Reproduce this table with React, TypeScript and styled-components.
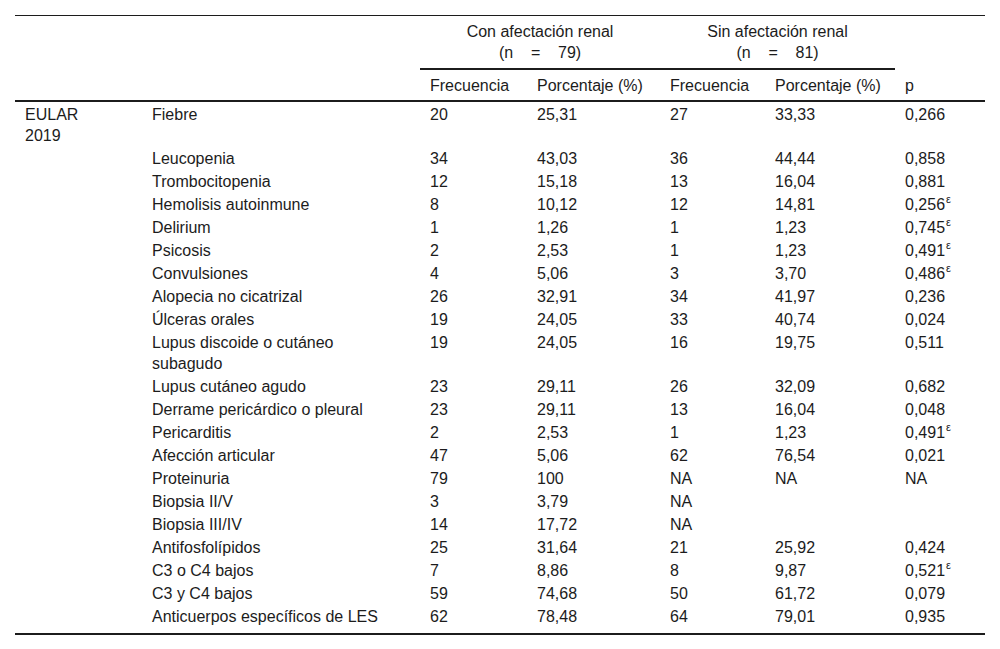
import React from 'react';
import styled, { createGlobalStyle } from 'styled-components';

type Row = {
  label: string;
  a: string;
  b: string;
  c: string;
  d: string;
  p: string;
  eps?: boolean;
};

const ROWS: Row[] = [
  { label: 'Fiebre', a: '20', b: '25,31', c: '27', d: '33,33', p: '0,266' },
  { label: 'Leucopenia', a: '34', b: '43,03', c: '36', d: '44,44', p: '0,858' },
  { label: 'Trombocitopenia', a: '12', b: '15,18', c: '13', d: '16,04', p: '0,881' },
  { label: 'Hemolisis autoinmune', a: '8', b: '10,12', c: '12', d: '14,81', p: '0,256', eps: true },
  { label: 'Delirium', a: '1', b: '1,26', c: '1', d: '1,23', p: '0,745', eps: true },
  { label: 'Psicosis', a: '2', b: '2,53', c: '1', d: '1,23', p: '0,491', eps: true },
  { label: 'Convulsiones', a: '4', b: '5,06', c: '3', d: '3,70', p: '0,486', eps: true },
  { label: 'Alopecia no cicatrizal', a: '26', b: '32,91', c: '34', d: '41,97', p: '0,236' },
  { label: 'Úlceras orales', a: '19', b: '24,05', c: '33', d: '40,74', p: '0,024' },
  { label: 'Lupus discoide o cutáneo subagudo', a: '19', b: '24,05', c: '16', d: '19,75', p: '0,511' },
  { label: 'Lupus cutáneo agudo', a: '23', b: '29,11', c: '26', d: '32,09', p: '0,682' },
  { label: 'Derrame pericárdico o pleural', a: '23', b: '29,11', c: '13', d: '16,04', p: '0,048' },
  { label: 'Pericarditis', a: '2', b: '2,53', c: '1', d: '1,23', p: '0,491', eps: true },
  { label: 'Afección articular', a: '47', b: '5,06', c: '62', d: '76,54', p: '0,021' },
  { label: 'Proteinuria', a: '79', b: '100', c: 'NA', d: 'NA', p: 'NA' },
  { label: 'Biopsia II/V', a: '3', b: '3,79', c: 'NA', d: '', p: '' },
  { label: 'Biopsia III/IV', a: '14', b: '17,72', c: 'NA', d: '', p: '' },
  { label: 'Antifosfolípidos', a: '25', b: '31,64', c: '21', d: '25,92', p: '0,424' },
  { label: 'C3 o C4 bajos', a: '7', b: '8,86', c: '8', d: '9,87', p: '0,521', eps: true },
  { label: 'C3 y C4 bajos', a: '59', b: '74,68', c: '50', d: '61,72', p: '0,079' },
  { label: 'Anticuerpos específicos de LES', a: '62', b: '78,48', c: '64', d: '79,01', p: '0,935' },
];

const GlobalStyle = createGlobalStyle`
  body {
    margin: 0;
    background: #fff;
    font-family: "Liberation Sans", Arial, sans-serif;
    color: #1c1c1c;
  }
`;

const Page = styled.div`
  padding: 15px 15px 0 15px;
`;

const Table = styled.table`
  width: 970px;
  border-collapse: collapse;
  table-layout: fixed;
  font-size: 16px;
  line-height: 21px;
  border-top: 1px solid #1c1c1c;
  border-bottom: 2px solid #1c1c1c;
`;

const GroupHead = styled.th`
  font-weight: normal;
  text-align: center;
  padding: 5px 10px;
  border-bottom: 2px solid #1c1c1c;
`;

const SubHead = styled.th`
  font-weight: normal;
  text-align: left;
  vertical-align: bottom;
  padding: 5px 10px 4px;
  border-bottom: 2px solid #1c1c1c;
`;

const Cell = styled.td<{ $first?: boolean; $last?: boolean; $right?: number }>`
  vertical-align: top;
  text-align: left;
  padding: ${(p) => (p.$first ? '2px' : '1px')} ${(p) => p.$right ?? 10}px
    ${(p) => (p.$last ? '6px' : '1px')} 10px;
`;

const Sup = styled.sup`
  font-size: 11px;
  line-height: 0;
  vertical-align: 7px;
  margin-left: 1px;
`;

export default function App() {
  return (
    <>
      <GlobalStyle />
      <Page>
        <Table>
          <colgroup>
            <col style={{ width: 127 }} />
            <col style={{ width: 278 }} />
            <col style={{ width: 107 }} />
            <col style={{ width: 133 }} />
            <col style={{ width: 105 }} />
            <col style={{ width: 130 }} />
            <col style={{ width: 90 }} />
          </colgroup>
          <thead>
            <tr>
              <th />
              <th />
              <GroupHead colSpan={2}>
                Con afectación renal
                <br />
                (n&nbsp;&nbsp;&nbsp;&nbsp;=&nbsp;&nbsp;&nbsp;&nbsp;79)
              </GroupHead>
              <GroupHead colSpan={2}>
                Sin afectación renal
                <br />
                (n&nbsp;&nbsp;&nbsp;&nbsp;=&nbsp;&nbsp;&nbsp;&nbsp;81)
              </GroupHead>
              <th />
            </tr>
            <tr>
              <SubHead />
              <SubHead />
              <SubHead>Frecuencia</SubHead>
              <SubHead>Porcentaje (%)</SubHead>
              <SubHead>Frecuencia</SubHead>
              <SubHead>Porcentaje (%)</SubHead>
              <SubHead>p</SubHead>
            </tr>
          </thead>
          <tbody>
            {ROWS.map((r, i) => {
              const first = i === 0;
              const last = i === ROWS.length - 1;
              return (
                <tr key={r.label}>
                  <Cell $first={first} $last={last} $right={50}>
                    {first ? 'EULAR 2019' : ''}
                  </Cell>
                  <Cell $first={first} $last={last} $right={38}>
                    {r.label}
                  </Cell>
                  <Cell $first={first} $last={last}>{r.a}</Cell>
                  <Cell $first={first} $last={last}>{r.b}</Cell>
                  <Cell $first={first} $last={last}>{r.c}</Cell>
                  <Cell $first={first} $last={last}>{r.d}</Cell>
                  <Cell $first={first} $last={last}>
                    {r.p}
                    {r.eps && <Sup>ε</Sup>}
                  </Cell>
                </tr>
              );
            })}
          </tbody>
        </Table>
      </Page>
    </>
  );
}
